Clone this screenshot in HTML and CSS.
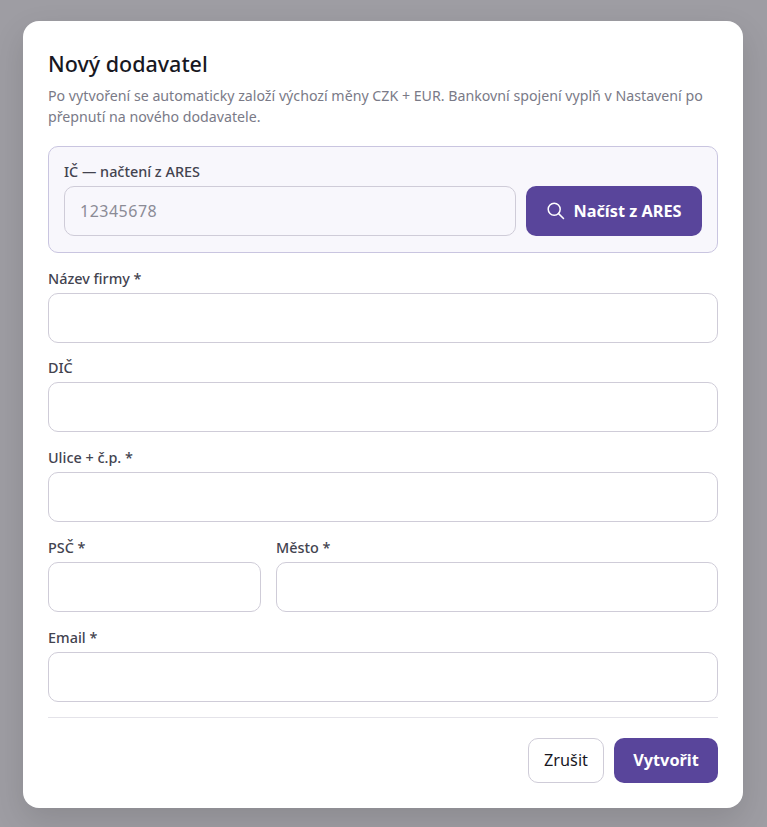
FILE: index.html
```html
<!DOCTYPE html>
<html lang="cs">
<head>
  <meta charset="UTF-8" />
  <meta name="viewport" content="width=device-width, initial-scale=1.0" />
  <title>Nový dodavatel</title>
  <link rel="stylesheet" href="styles.css">
</head>
<body>
  <div class="overlay">
    <form class="modal">
      <h1>Nový dodavatel</h1>
      <p class="hint">Po vytvoření se automaticky založí výchozí měny CZK + EUR. Bankovní spojení vyplň v Nastavení po přepnutí na nového dodavatele.</p>

      <div class="ares-box">
        <label for="ico">IČ — načtení z ARES</label>
        <div class="ares-row">
          <input type="text" id="ico" placeholder="12345678" />
          <button type="button" class="btn btn-primary btn-ares">
            <svg width="20" height="20" viewBox="0 0 20 20" fill="none" stroke="currentColor" stroke-width="1.5" stroke-linecap="round">
              <circle cx="8.2" cy="8.2" r="6" />
              <path d="M12.6 12.6 L17.5 17.5" />
            </svg>
            Načíst z ARES
          </button>
        </div>
      </div>

      <div class="field">
        <label for="name">Název firmy *</label>
        <input type="text" id="name" />
      </div>
      <div class="field">
        <label for="dic">DIČ</label>
        <input type="text" id="dic" />
      </div>
      <div class="field">
        <label for="street">Ulice + č.p. *</label>
        <input type="text" id="street" />
      </div>
      <div class="field-row">
        <div class="field">
          <label for="zip">PSČ *</label>
          <input type="text" id="zip" />
        </div>
        <div class="field">
          <label for="city">Město *</label>
          <input type="text" id="city" />
        </div>
      </div>
      <div class="field">
        <label for="email">Email *</label>
        <input type="email" id="email" />
      </div>

      <div class="actions">
        <button type="button" class="btn btn-ghost">Zrušit</button>
        <button type="submit" class="btn btn-primary">Vytvořit</button>
      </div>
    </form>
  </div>
</body>
</html>
```

FILE: styles.css
```css
:root {
  --purple: #59459b;
  --line: #cfccd8;
  --ink: #18181f;
  --label: #43434f;
  --muted: #7a7a87;
}
html, body {
  margin: 0;
  padding: 0;
  width: 100%;
  height: 100%;
  font-family: "Noto Sans", Arial, sans-serif;
  background-color: #9e9da3;
  overflow: hidden;
}
.overlay {
  padding: 21px 24px 0 23px;
}
.modal {
  box-sizing: border-box;
  width: 720px;
  height: 787px;
  padding: 28px 25px 25px;
  background-color: #fff;
  border-radius: 16px;
  box-shadow: 0 12px 32px rgba(0, 0, 0, 0.12);
}
h1 {
  margin: 0 0 7px;
  font-size: 21.5px;
  line-height: 30px;
  font-weight: 500;
  color: var(--ink);
}
.hint {
  margin: 0 0 19px;
  font-size: 14.2px;
  line-height: 20.5px;
  color: var(--muted);
}
label {
  display: block;
  margin-bottom: 3px;
  font-size: 14.4px;
  line-height: 22px;
  font-weight: 500;
  color: var(--label);
}
input {
  display: block;
  box-sizing: border-box;
  width: 100%;
  height: 50px;
  padding: 0 15px;
  font-family: inherit;
  font-size: 16px;
  color: var(--ink);
  background-color: #fff;
  border: 1px solid var(--line);
  border-radius: 10px;
}
input::placeholder {
  color: #8b8b96;
  letter-spacing: 0.5px;
}
.ares-box {
  box-sizing: border-box;
  height: 107px;
  padding: 14px 15px 15px;
  margin-bottom: 14.5px;
  background-color: #f8f7fc;
  border: 1px solid #c9c5e0;
  border-radius: 10px;
}
.ares-box input {
  background-color: #f8f7fc;
}
.ares-row {
  display: flex;
  gap: 10px;
}
.ares-row input {
  flex: 1;
  min-width: 0;
}
.field {
  margin-bottom: 14.75px;
}
.field-row {
  display: grid;
  grid-template-columns: 213px 1fr;
  gap: 15px;
}
.btn {
  font-family: inherit;
  font-size: 16.3px;
  border-radius: 10px;
  cursor: pointer;
}
.btn-primary {
  background-color: var(--purple);
  color: #fff;
  font-weight: 700;
  border: none;
}
.btn-ghost {
  background-color: #fff;
  color: var(--ink);
  border: 1px solid var(--line);
}
.btn-ares {
  display: flex;
  align-items: center;
  justify-content: center;
  gap: 7px;
  flex: none;
  width: 176px;
  height: 50px;
  padding: 0;
}
.actions {
  display: flex;
  justify-content: flex-end;
  gap: 10px;
  margin-top: 15px;
  padding-top: 20px;
  border-top: 1px solid #e4e3e9;
}
.actions .btn {
  height: 45px;
  padding: 0 15px;
}
.actions .btn-primary {
  width: 104px;
  padding: 0;
}
```
